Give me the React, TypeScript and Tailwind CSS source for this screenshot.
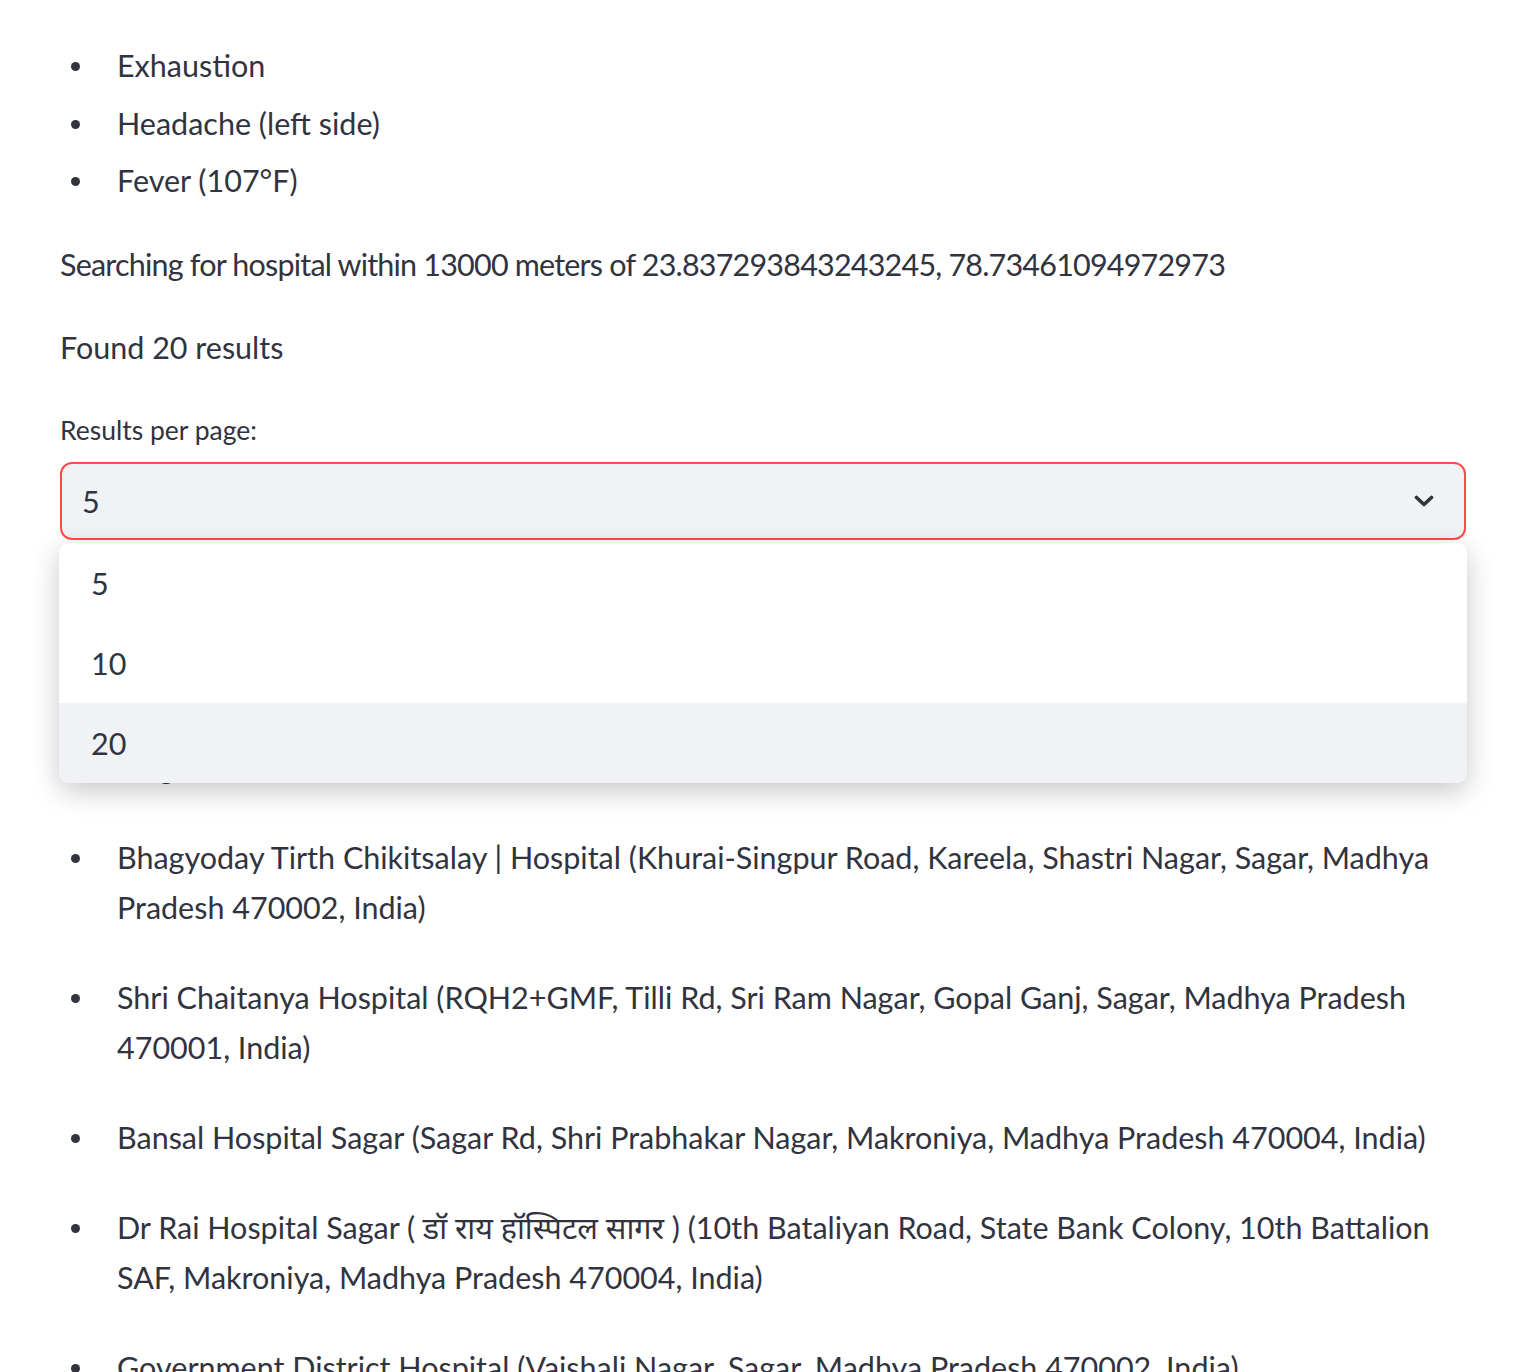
const SYMPTOMS = ['Exhaustion', 'Headache (left side)', 'Fever (107°F)'];

const HOSPITALS = [
  'Bhagyoday Tirth Chikitsalay | Hospital (Khurai-Singpur Road, Kareela, Shastri Nagar, Sagar, Madhya Pradesh 470002, India)',
  'Shri Chaitanya Hospital (RQH2+GMF, Tilli Rd, Sri Ram Nagar, Gopal Ganj, Sagar, Madhya Pradesh 470001, India)',
  'Bansal Hospital Sagar (Sagar Rd, Shri Prabhakar Nagar, Makroniya, Madhya Pradesh 470004, India)',
  'Dr Rai Hospital Sagar ( डॉ राय हॉस्पिटल सागर ) (10th Bataliyan Road, State Bank Colony, 10th Battalion SAF, Makroniya, Madhya Pradesh 470004, India)',
  'Government District Hospital (Vaishali Nagar, Sagar, Madhya Pradesh 470002, India)',
];

const OPTIONS = ['5', '10', '20'];

function Bullet({ children }: { children: React.ReactNode }) {
  return (
    <li className="flex">
      <span className="flex h-[50px] w-[57px] shrink-0 items-center pl-[11px] pt-[3px]">
        <span className="h-[9px] w-[9px] rounded-full bg-[#31333f]" />
      </span>
      <span className="min-w-0 flex-1">{children}</span>
    </li>
  );
}

export default function App() {
  return (
    <div
      className="min-h-screen bg-white pl-[60px] pr-[64px] pt-[40px] text-[30.5px] leading-[50px] text-[#31333f]"
      style={{ fontFamily: 'Lato, "Noto Sans", "Noto Sans Devanagari", sans-serif' }}
    >
      {/* Symptoms */}
      <ul className="flex flex-col gap-[7.5px]">
        {SYMPTOMS.map((s) => (
          <Bullet key={s}>{s}</Bullet>
        ))}
      </ul>

      <p className="mt-[34px] tracking-[-0.8px]">
        Searching for hospital within 13000 meters of 23.837293843243245, 78.73461094972973
      </p>
      <p className="mt-[33px]">Found 20 results</p>

      {/* Results per page */}
      <label className="mt-[40px] block text-[26.5px] leading-[36px]">Results per page:</label>
      <div className="relative mt-[14px]">
        <div className="flex h-[78px] items-center justify-between rounded-[12px] border-2 border-[#ff4b4b] bg-[#f0f2f6] pl-[20px] pr-[30px]">
          <span>5</span>
          <svg width="20" height="12" viewBox="0 0 20 12" fill="none" stroke="#31333f" strokeWidth="3.6" strokeLinecap="round" strokeLinejoin="round">
            <path d="M2.5 2.5 L10 9.5 L17.5 2.5" />
          </svg>
        </div>

        <ul className="absolute left-[-1px] right-[-1px] top-[81px] z-10 overflow-hidden rounded-[10px] bg-white shadow-[0_8px_28px_rgba(0,0,0,0.22)]">
          {OPTIONS.map((o) => (
            <li
              key={o}
              className={`flex h-[80px] items-center pl-[32px] ${o === '20' ? 'bg-[#f0f2f6]' : ''}`}
            >
              {o}
            </li>
          ))}
        </ul>
      </div>

      {/* hidden under the open dropdown */}
      <p className="mt-[202px]">Showing 1 - 5</p>

      {/* Hospitals */}
      <ul className="mt-[40px] flex flex-col gap-[40px] pb-[40px]">
        {HOSPITALS.map((h) => (
          <Bullet key={h}>{h}</Bullet>
        ))}
      </ul>
    </div>
  );
}
